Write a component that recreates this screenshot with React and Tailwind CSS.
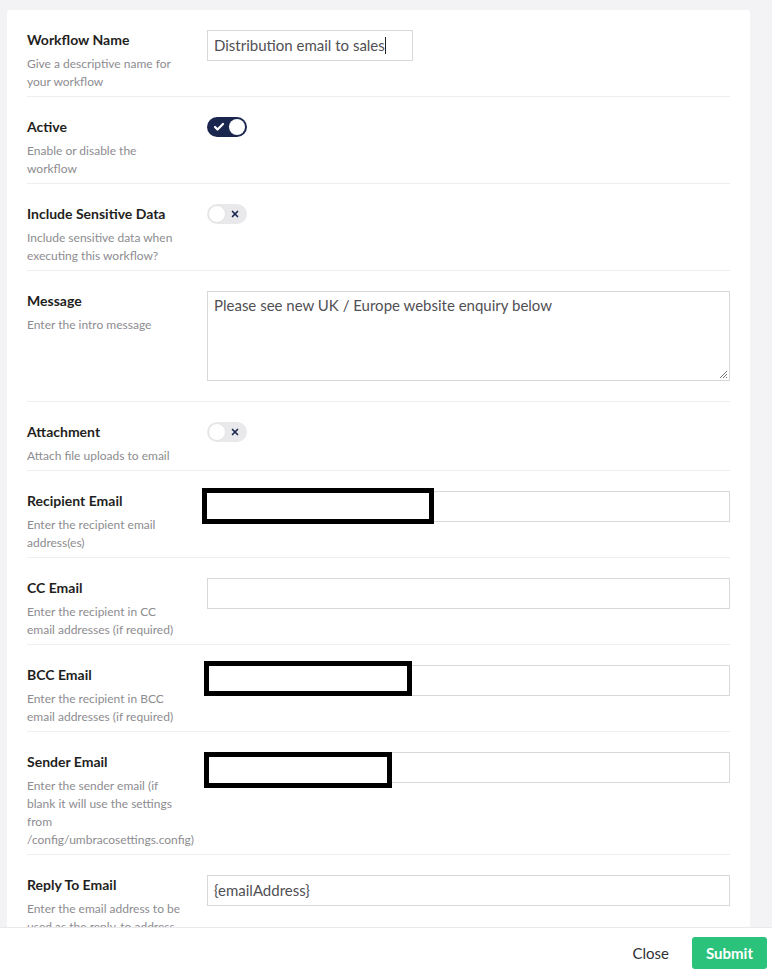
import { Check, X } from "lucide-react";

const Toggle = ({ on }) => (
  <div
    className={
      on
        ? "relative w-[40px] h-[20px] rounded-full bg-[#1b264f] flex items-center"
        : "relative w-[40px] h-[20px] rounded-full bg-[#e9e9eb] flex items-center"
    }
  >
    {on ? (
      <>
        <Check className="absolute left-[6px] w-[12px] h-[12px] text-white" strokeWidth={4.5} />
        <div className="absolute right-[2px] w-[16px] h-[16px] rounded-full bg-white" />
      </>
    ) : (
      <>
        <div className="absolute left-[1px] w-[18px] h-[18px] rounded-full bg-white border border-[#e3e3e5]" />
        <X className="absolute right-[7px] w-[10px] h-[10px] text-[#1b264f]" strokeWidth={4} />
      </>
    )}
  </div>
);

// black redaction box drawn over an input
const Redact = ({ className }) => (
  <div className={"absolute border-[5px] border-black bg-white " + className} />
);

const Label = ({ label, desc }) => (
  <div className="w-[180px] shrink-0">
    <div className="text-[14px] leading-5 font-bold text-[#1f1f22]">{label}</div>
    <div className="mt-[5px] max-w-[156px] text-[12px] leading-[18px] text-[#8d8c90]">{desc}</div>
  </div>
);

const Row = ({ label, desc, children }) => (
  <div className="flex border-b border-[#eeeef0] pt-5 pb-[5px]">
    <Label label={label} desc={desc} />
    <div className="flex-1">{children}</div>
  </div>
);

const TextInput = ({ value, width = "w-full", children }) => (
  <div className={"relative h-[31px] border border-[#d8d7d9] bg-white px-[6px] flex items-center text-[15px] text-[#515054] " + width}>
    {value}
    {children}
  </div>
);

export default function App() {
  return (
    <div
      className="h-[970px] flex flex-col bg-[#f3f3f5] overflow-hidden"
      style={{ fontFamily: "Lato, 'Open Sans', sans-serif" }}
    >
      <main className="flex-1 overflow-hidden pt-[10px] pl-[7px] pr-[22px]">
        <div className="bg-white rounded-[3px] px-5">
          <Row label="Workflow Name" desc="Give a descriptive name for your workflow">
            <TextInput value="Distribution email to sales" width="w-[206px]">
              <span className="w-px h-[17px] bg-[#222]" />
            </TextInput>
          </Row>

          <Row label="Active" desc="Enable or disable the workflow">
            <Toggle on />
          </Row>

          <Row label="Include Sensitive Data" desc="Include sensitive data when executing this workflow?">
            <Toggle />
          </Row>

          <div className="flex border-b border-[#eeeef0] pt-5 pb-[5px]">
            <Label label="Message" desc="Enter the intro message" />
            <div className="flex-1 relative h-[90px] mb-[15px] border border-[#d8d7d9] px-[6px] pt-[2px] text-[15px] leading-[22px] text-[#515054]">
              Please see new UK / Europe website enquiry below
              <svg className="absolute right-[1px] bottom-[1px]" width="9" height="9" viewBox="0 0 9 9">
                <path d="M8 1L1 8M8 4L4 8M8 7L7 8" stroke="#777" strokeWidth="1" />
              </svg>
            </div>
          </div>

          <Row label="Attachment" desc="Attach file uploads to email">
            <Toggle />
          </Row>

          <Row label="Recipient Email" desc="Enter the recipient email address(es)">
            <TextInput>
              <Redact className="left-[-6px] top-[-4px] w-[232px] h-[36px]" />
            </TextInput>
          </Row>

          <Row label="CC Email" desc="Enter the recipient in CC email addresses (if required)">
            <TextInput />
          </Row>

          <Row label="BCC Email" desc="Enter the recipient in BCC email addresses (if required)">
            <TextInput>
              <Redact className="left-[-4px] top-[-5px] w-[208px] h-[35px]" />
            </TextInput>
          </Row>

          <Row
            label="Sender Email"
            desc="Enter the sender email (if blank it will use the settings from /config/umbracosettings.config)"
          >
            <TextInput>
              <Redact className="left-[-4px] top-[-1px] w-[188px] h-[36px]" />
            </TextInput>
          </Row>

          <Row label="Reply To Email" desc="Enter the email address to be used as the reply-to address">
            <TextInput value="{emailAddress}" />
          </Row>
        </div>
      </main>

      <footer className="h-[43px] shrink-0 bg-white border-t border-[#e9e9eb] flex items-start justify-end pt-[9px] pr-[5px] gap-[23px]">
        <button className="h-[32px] text-[15px] text-[#303033]">Close</button>
        <button className="h-[32px] w-[75px] rounded-[3px] bg-[#2bc37c] text-white text-[15px] font-bold">
          Submit
        </button>
      </footer>
    </div>
  );
}
